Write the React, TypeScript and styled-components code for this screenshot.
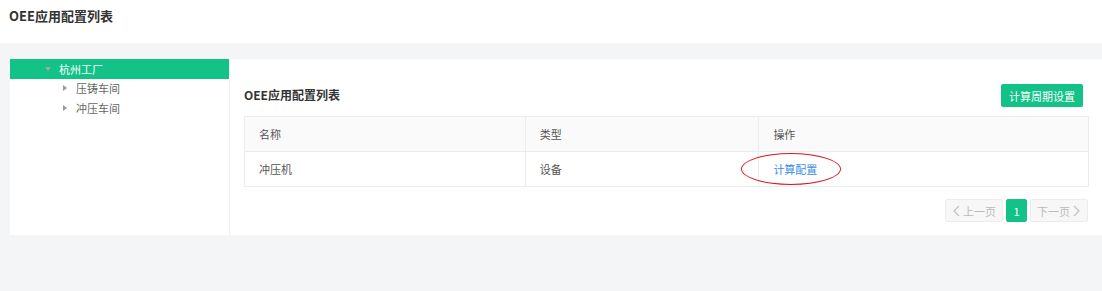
import React from "react";
import styled, { createGlobalStyle } from "styled-components";

const Global = createGlobalStyle`
  html, body { margin: 0; padding: 0; background: #f4f5f7; }
  body { font-family: "Microsoft YaHei", "Noto Sans CJK SC", "Liberation Sans", sans-serif; font-size: 12px; color: #333; }
`;

const Page = styled.div`
  width: 1102px;
  height: 291px;
  background: #f4f5f7;
  display: flex;
  flex-direction: column;
`;

const Header = styled.div`
  height: 43px;
  background: #fff;
  display: flex;
  align-items: center;
  padding: 0 0 0 9px;
  box-sizing: border-box;
`;

const PageTitle = styled.h1`
  margin: 0 0 12px 0;
  font-size: 13px;
  font-weight: bold;
  color: #333;
`;

const Body = styled.div`
  margin: 16px 0 0 10px;
  display: flex;
  height: 176px;
`;

const Tree = styled.div`
  width: 219px;
  background: #fff;
  border-right: 1px solid #eceef0;
`;

const TreeRow = styled.div<{ $active?: boolean; $level: number }>`
  height: 20px;
  line-height: 20px;
  display: flex;
  align-items: center;
  padding-left: ${(p) => (p.$level === 0 ? 35 : 53)}px;
  background: ${(p) => (p.$active ? "#12c287" : "transparent")};
  color: ${(p) => (p.$active ? "#fff" : "#666")};
  font-size: 11px;
  margin-top: ${(p) => (p.$level === 0 ? 0 : -1)}px;
  & + & + & { margin-top: 0; }
`;

const Arrow = styled.span<{ $open?: boolean }>`
  width: 0;
  height: 0;
  ${(p) =>
    p.$open
      ? `border-left: 3px solid transparent; border-right: 3px solid transparent; border-top: 4px solid #a7a7a7; margin-right: 8px;`
      : `border-top: 3px solid transparent; border-bottom: 3px solid transparent; border-left: 4px solid #999; margin-right: 9px;`}
`;

const Main = styled.div`
  flex: 1;
  background: #fff;
  padding: 25px 13px 0 14px;
  display: flex;
  flex-direction: column;
`;

const Toolbar = styled.div`
  display: flex;
  justify-content: space-between;
  align-items: flex-start;
  height: 32px;
`;

const SectionTitle = styled.h2`
  margin: 2px 0 0 0;
  font-size: 12px;
  font-weight: bold;
  color: #333;
`;

const PrimaryButton = styled.button`
  width: 82px;
  height: 23px;
  margin-right: 6px;
  background: #12c287;
  border: none;
  border-radius: 2px;
  color: #fff;
  font-family: inherit;
  font-size: 11px;
  padding: 0;
`;

const Table = styled.table`
  width: 845px;
  border-collapse: collapse;
  border: 1px solid #ececec;
  font-size: 11px;
  color: #555;
`;

const Th = styled.th<{ $w: number }>`
  width: ${(p) => p.$w}px;
  height: 35px;
  background: #fafafa;
  border: 1px solid #ececec;
  text-align: left;
  font-weight: normal;
  padding: 0 0 0 14px;
  box-sizing: border-box;
`;

const Td = styled.td`
  height: 35px;
  border: 1px solid #ececec;
  padding: 0 0 0 14px;
  box-sizing: border-box;
`;

const ActionCell = styled(Td)`
  position: relative;
`;

const Link = styled.a`
  color: #3a8ee6;
  font-size: 11px;
  cursor: pointer;
`;

const Ellipse = styled.span`
  position: absolute;
  left: -18px;
  top: 1px;
  width: 98px;
  height: 30px;
  border: 1.5px solid #e0151b;
  border-radius: 50%;
  pointer-events: none;
`;

const Pager = styled.div`
  display: flex;
  justify-content: flex-end;
  gap: 3px;
  margin-top: 12px;
  margin-right: 1px;
`;

const PageBtn = styled.button<{ $active?: boolean; $w: number }>`
  width: ${(p) => p.$w}px;
  height: 23px;
  border: 1px solid ${(p) => (p.$active ? "#12c287" : "#ececec")};
  background: ${(p) => (p.$active ? "#12c287" : "#f7f7f7")};
  color: ${(p) => (p.$active ? "#fff" : "#bbb")};
  border-radius: 2px;
  font-family: inherit;
  font-size: 11px;
  padding: 0;
  display: flex;
  align-items: center;
  justify-content: center;
  gap: 3px;
`;

const Chevron = ({ dir }: { dir: "l" | "r" }) => (
  <svg width="8" height="12" viewBox="0 0 8 12">
    <path d={dir === "l" ? "M7 1 L2 6 L7 11" : "M1 1 L6 6 L1 11"} stroke="#c4c4c4" strokeWidth="1.3" fill="none" />
  </svg>
);

export default function App() {
  return (
    <Page>
      <Global />
      <Header>
        <PageTitle>OEE应用配置列表</PageTitle>
      </Header>
      <Body>
        <Tree>
          <TreeRow $active $level={0}>
            <Arrow $open />
            杭州工厂
          </TreeRow>
          <TreeRow $level={1}>
            <Arrow />
            压铸车间
          </TreeRow>
          <TreeRow $level={1}>
            <Arrow />
            冲压车间
          </TreeRow>
        </Tree>
        <Main>
          <Toolbar>
            <SectionTitle>OEE应用配置列表</SectionTitle>
            <PrimaryButton>计算周期设置</PrimaryButton>
          </Toolbar>
          <Table>
            <thead>
              <tr>
                <Th $w={281}>名称</Th>
                <Th $w={234}>类型</Th>
                <Th $w={330}>操作</Th>
              </tr>
            </thead>
            <tbody>
              <tr>
                <Td>冲压机</Td>
                <Td>设备</Td>
                <ActionCell>
                  <Link>计算配置</Link>
                  <Ellipse />
                </ActionCell>
              </tr>
            </tbody>
          </Table>
          <Pager>
            <PageBtn $w={58}>
              <Chevron dir="l" />
              上一页
            </PageBtn>
            <PageBtn $w={21} $active>
              1
            </PageBtn>
            <PageBtn $w={58}>
              下一页
              <Chevron dir="r" />
            </PageBtn>
          </Pager>
        </Main>
      </Body>
    </Page>
  );
}
